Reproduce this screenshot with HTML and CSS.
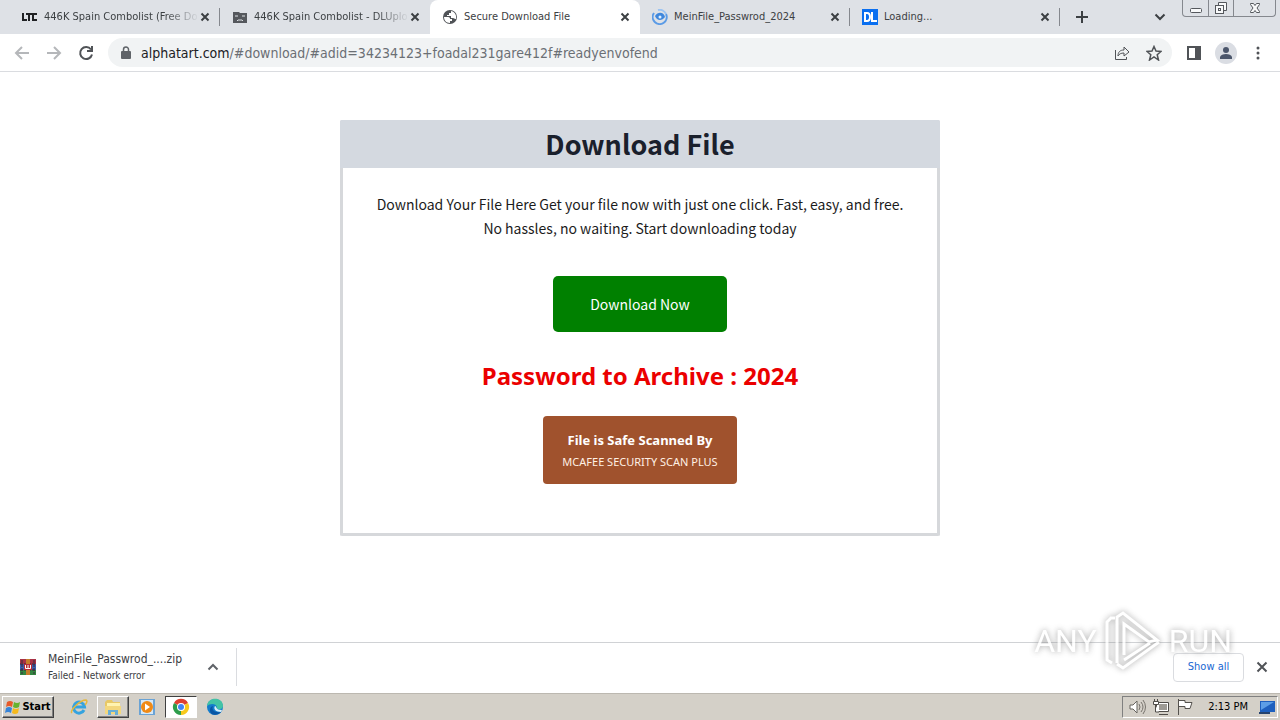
FILE: index.html
```html
<!DOCTYPE html>
<html lang="en">
<head>
<meta charset="utf-8">
<title>Secure Download File</title>
<link rel="stylesheet" href="styles.css">
</head>
<body>
<div class="screen">
  <header class="tab-strip">
    <div class="tab">
      <svg class="icon" viewBox="0 0 16 16"><path d="M1 4v7h4M4 5h6M7 5v7M15 5h-4v6h4" fill="none" stroke="#202124" stroke-width="2"/></svg>
      <span class="tab-title fade">446K Spain Combolist (Free Do</span>
      <button class="tab-close" aria-label="Close tab"><svg viewBox="0 0 10 10"><path d="M1.500 1.500l7 7M8.500 1.500l-7 7"/></svg></button>
    </div>
    <div class="tab no-line">
      <svg class="icon" viewBox="0 0 16 16"><path d="M1 3h6l1 1h7v10H1z" fill="#55585d"/><path d="M3 7h3M10 7h3M5 12l1-1h4l1 1" stroke="#dee1e6" fill="none"/></svg>
      <span class="tab-title fade">446K Spain Combolist - DLUplo</span>
      <button class="tab-close" aria-label="Close tab"><svg viewBox="0 0 10 10"><path d="M1.500 1.500l7 7M8.500 1.500l-7 7"/></svg></button>
    </div>
    <div class="tab active">
      <svg class="icon" viewBox="0 0 16 16"><circle cx="8" cy="8" r="7" fill="#505357"/><path d="M2 8h4c2 0 2 1 2 2h2v2H8v2c-4 0-6-3-6-6zM9 2v2H7v2H5v1h4v2h2c1 0 1 1 3 1 1-4-2-8-5-8z" fill="#fff"/></svg>
      <span class="tab-title">Secure Download File</span>
      <button class="tab-close" aria-label="Close tab"><svg viewBox="0 0 10 10"><path d="M1.500 1.500l7 7M8.500 1.500l-7 7"/></svg></button>
    </div>
    <div class="tab">
      <svg class="icon" viewBox="0 0 16 16"><path d="M2 4a7 7 0 1 0 12 1" fill="none" stroke="#5b9be6" stroke-width="2"/><path d="M6 1a7 7 0 0 1 8 4" fill="none" stroke="#9cc4f2" stroke-width="2"/><path d="M3 7c3-5 9-4 10 1-3 4-8 4-10-1z" fill="#3f87dc"/><circle cx="8" cy="8" r="1.500" fill="#dff0ff"/></svg>
      <span class="tab-title">MeinFile_Passwrod_2024</span>
      <button class="tab-close" aria-label="Close tab"><svg viewBox="0 0 10 10"><path d="M1.500 1.500l7 7M8.500 1.500l-7 7"/></svg></button>
    </div>
    <div class="tab">
      <svg class="icon" viewBox="0 0 16 16"><path d="M0 0h16v16H0z" fill="#0a6ff0"/><path d="M3 4h2q3 0 3 4t-3 4H3zM10 3v9h5" fill="none" stroke="#fff" stroke-width="2"/></svg>
      <span class="tab-title">Loading...</span>
      <button class="tab-close" aria-label="Close tab"><svg viewBox="0 0 10 10"><path d="M1.500 1.500l7 7M8.500 1.500l-7 7"/></svg></button>
    </div>
    <button class="new-tab" aria-label="New tab"><svg viewBox="0 0 14 14"><path d="M7 1v12M1 7h12" stroke="#3c4043" stroke-width="2"/></svg></button>
    <button class="tab-search" aria-label="Search tabs"><svg viewBox="0 0 12 12"><path d="M1.500 3.500L6 8l4.500-4.500" fill="none" stroke="#3c4043" stroke-width="2"/></svg></button>
    <div class="window-buttons">
      <button aria-label="Minimize"><svg viewBox="0 0 16 16"><rect x="2.500" y="8.500" width="11" height="4" rx="1"/></svg></button>
      <button aria-label="Restore"><svg viewBox="0 0 16 16"><path d="M5.500 5V2.500h8v8H11"/><rect x="2.500" y="5.500" width="8" height="8"/><rect x="5.500" y="8.500" width="2" height="2"/></svg></button>
      <button class="wide" aria-label="Close"><svg viewBox="0 0 16 16"><path d="M3.500 3.500h3L8 5.500l1.500-2h3v1L10 8l2.500 3.500v1h-3L8 10.500l-1.500 2h-3v-1L6 8 3.500 4.500z"/></svg></button>
    </div>
  </header>

  <nav class="toolbar">
    <button aria-label="Back"><svg class="dim" viewBox="0 0 16 16"><path d="M15 8H2M8 2L2 8l6 6"/></svg></button>
    <button aria-label="Forward"><svg class="dim" viewBox="0 0 16 16"><path d="M1 8h13M8 2l6 6-6 6"/></svg></button>
    <button aria-label="Reload"><svg class="dark" viewBox="0 0 16 16"><path d="M13 4.500A6 6 0 1 0 14 9.500M14 1v5H9"/></svg></button>
    <div class="address">
      <svg class="icon" viewBox="0 0 16 16"><rect x="3" y="6" width="10" height="8" rx="1" fill="#5f6368"/><path d="M5.500 7V4.500a2.500 2.500 0 0 1 5 0V7" fill="none" stroke="#5f6368" stroke-width="1.500"/></svg>
      <a class="url" href="#download">alphatart.com<span>/#download/#adid=34234123+foadal231gare412f#readyenvofend</span></a>
      <button aria-label="Share"><svg class="thin" viewBox="0 0 16 16"><path d="M1.500 5v9.500h11V12M4 11c0-4 2-6 6-6V2l5 5-5 4V8c-3 0-5 1-6 3z"/></svg></button>
      <button aria-label="Bookmark"><svg class="thin star" viewBox="0 0 16 16"><path d="M8 1.500l2 4.500 5 .5-3.800 3.300L12.500 15 8 12l-4.500 3 1.300-5.200L1 6.500 6 6z"/></svg></button>
    </div>
    <button aria-label="Side panel"><svg viewBox="0 0 16 16"><path d="M1 1h14v14H1zM3 3v10h6V3z" fill="#505357" fill-rule="evenodd"/></svg></button>
    <button class="profile" aria-label="Profile"><svg viewBox="0 0 16 16"><circle cx="8" cy="5" r="3"/><path d="M2 14v-2c1-4 11-4 12 0v2z"/></svg></button>
    <button aria-label="Menu"><svg viewBox="0 0 16 16"><g fill="#505357"><circle cx="8" cy="3" r="1.500"/><circle cx="8" cy="8" r="1.500"/><circle cx="8" cy="13" r="1.500"/></g></svg></button>
  </nav>

  <main class="page">
    <section class="card">
      <h1>Download File</h1>
      <div class="card-body">
        <p>Download Your File Here Get your file now with just one click. Fast, easy, and free. No hassles, no waiting. Start downloading today</p>
        <button class="download">Download Now</button>
        <h2>Password to Archive : 2024</h2>
        <button class="safe"><strong>File is Safe Scanned By</strong><span>MCAFEE SECURITY SCAN PLUS</span></button>
      </div>
    </section>
  </main>

  <section class="downloads">
    <div class="item">
      <svg class="icon" viewBox="0 0 16 16"><path d="M0 0h16v5H0z" fill="#a83246"/><path d="M0 5h16v6H0z" fill="#3d5fae"/><path d="M0 11h16v5H0z" fill="#348541"/><path d="M0 5h16M0 11h16M2 1v14M14 1v14" stroke="#382b3a" stroke-dasharray="3 1"/><path d="M6 0h4v16H6z" fill="#c67d2b"/><path d="M4 5h8v6H4z" fill="#b92c36"/><path d="M5.500 6v3.500h5V6M8 6v3" fill="none" stroke="#fff"/></svg>
      <div class="file"><span class="file-name">MeinFile_Passwrod_....zip</span><span class="file-state">Failed - Network error</span></div>
      <button aria-label="Download options"><svg viewBox="0 0 12 12"><path d="M1.500 8.500L6 4l4.500 4.500" fill="none" stroke="#5f6368" stroke-width="2"/></svg></button>
    </div>
    <button class="show-all">Show all</button>
    <button class="close-bar" aria-label="Close downloads"><svg viewBox="0 0 12 12"><path d="M1.500 1.500l9 9M10.500 1.500l-9 9" stroke="#505357" stroke-width="2"/></svg></button>
  </section>

  <footer class="taskbar">
    <button class="start raised"><svg viewBox="0 0 16 16"><path d="M2 3q3-2 6 0L7 8Q4 6 1 8z" fill="#e75a28"/><path d="M9 3q3 2 6 0l-1 5q-3 2-6 0z" fill="#66b32e"/><path d="M1 9q3-2 6 0l-1 5q-3-2-6 0z" fill="#3684d8"/><path d="M8 9q3 2 6 0l-1 5q-3 2-6 0z" fill="#f5b91c"/></svg>Start</button>
    <button class="task" aria-label="Internet Explorer"><svg viewBox="0 0 18 18"><path d="M14 12a5.500 5.500 0 1 1 .5-3H5" fill="none" stroke="#35a3df" stroke-width="3"/><path d="M2 15C-1 13 10 2 16 2c2 1 0 4-1 5" fill="none" stroke="#e6b83b" stroke-width="1.500"/></svg></button>
    <button class="task raised" aria-label="File Explorer"><svg viewBox="0 0 18 18"><path d="M1 4l2-2h5l1 2h7v12H1z" fill="#e8c866"/><path d="M3 5h13v5H3z" fill="#fff3b0"/><path d="M1 8h16v8H1z" fill="#f3d77d"/><path d="M4 17v-5h10v5h-3v-3H7v3z" fill="#69aed5"/></svg></button>
    <button class="task" aria-label="Media Player"><svg viewBox="0 0 18 18"><path d="M1 1h16v16H1z" fill="#6aa3d5"/><path d="M3 2h12v14H3z" fill="#d6e8f6"/><circle cx="9" cy="9" r="6" fill="#f08a16"/><path d="M7 5.500v7l5-3.500z" fill="#fff"/></svg></button>
    <button class="task pressed" aria-label="Chrome"><svg viewBox="0 0 18 18"><path d="M9 9L2 5a8 8 0 0 1 14 0z" fill="#df4030"/><path d="M9 9l7-4a8 8 0 0 1-7 12z" fill="#f8c91c"/><path d="M9 9v8A8 8 0 0 1 2 5z" fill="#2d9d4b"/><circle cx="9" cy="9" r="4" fill="#fff"/><circle cx="9" cy="9" r="3" fill="#4285f4"/></svg></button>
    <button class="task" aria-label="Edge"><svg viewBox="0 0 18 18"><circle cx="9" cy="9" r="8" fill="#137ccc"/><path d="M1 8C2-2 17-1 17 8c0 4-6 4-6 2 0-5-7-5-10-2z" fill="#43c3a5"/><path d="M7 8c-2 4 2 7 8 6-3 4-11 4-11-2 0-3 2-4 3-4z" fill="#0955a4"/><path d="M9 8c2 0 0 4 7 4l-1 2C10 14 7 11 9 8z" fill="#d8eefa"/></svg></button>
    <div class="tray">
      <svg viewBox="0 0 18 18"><path d="M2 7h3l4-4v12l-4-4H2z" fill="#fff" stroke="#67645f"/><path d="M11 6q2 3 0 6M13 4q4 5 0 10M15 2q5 7 0 14" fill="none" stroke="#77736d"/></svg>
      <svg viewBox="0 0 18 18"><path d="M4.500 4.500h12v9h-12zM7 16.500h9" fill="#fff" stroke="#4f4c48"/><path d="M7 6h8v6H7z" fill="#9d9a94"/><path d="M1.500 3.500h5v3h-5zM2.500 1v2M5.500 1v2M3.500 7v7H7" fill="#fff" stroke="#4f4c48"/></svg>
      <svg viewBox="0 0 18 18"><path d="M2.500 1v16M3 2.500h6v2h7l-2 6H9v-2H3" fill="#fff" stroke="#55524e"/></svg>
      <time>2:13 PM</time>
      <svg viewBox="0 0 18 18"><path d="M2 3h15v11H2z" fill="#1e60be"/><path d="M3 4h13L3 12z" fill="#5c9ee6"/><path d="M1 14h11v2H1z" fill="#26436e"/></svg>
    </div>
  </footer>

  <div class="watermark"><span>ANY</span><svg viewBox="0 0 60 64"><path d="M12 9H8l-4 4v38l5 3M14 54V8l6-4 34 27-8 2-25-18v31M14 55l6 4 36-26M21 51l26-17" /></svg><span>RUN</span></div>
</div>
</body>
</html>
```
FILE: styles.css
```css
* { box-sizing: border-box; }
body { margin: 0; background: #fff; color: #202124; font: 11px/16px "DejaVu Sans Condensed", "DejaVu Sans", sans-serif; }
button { display: flex; align-items: center; justify-content: center; border: 0; padding: 0; background: none; color: inherit; font: inherit; }
svg { display: block; flex: none; width: 16px; height: 16px; }
.screen { position: relative; display: flex; flex-direction: column; min-height: 100vh; }
.tab-strip { display: flex; height: 34px; padding-left: 10px; background: #dee1e6; }
.tab { display: flex; align-items: center; flex: 0 1 210px; min-width: 0; padding: 0 9px 0 10px; position: relative; }
.tab:not(.active):not(.no-line)::after { content: ""; position: absolute; right: 0; top: 8px; width: 1px; height: 18px; background: #85888e; }
.tab.active { background: #fff; border-radius: 8px 8px 0 0; }
.tab .icon { margin: 0 6px 0 2px; }
.tab-title { flex: 1; overflow: hidden; white-space: nowrap; color: #3c4043; }
.fade { -webkit-mask-image: linear-gradient(to right, #000 78%, transparent); mask-image: linear-gradient(to right, #000 78%, transparent); }
.tab-close svg { width: 10px; height: 10px; stroke: #3c4043; stroke-width: 2; }
.tab-close { width: 12px; height: 16px; }
.new-tab { width: 44px; }
.new-tab svg { width: 14px; height: 14px; }
.tab-search { margin-left: auto; width: 44px; }
.tab-search svg { width: 12px; height: 12px; }
.window-buttons { display: flex; height: 17px; margin-right: 4px; border: 1px solid #85888e; border-top: 0; border-radius: 0 0 4px 4px; }
.window-buttons button { width: 25px; }
.window-buttons button + button { border-left: 1px solid #85888e; }
.window-buttons .wide { width: 42px; }
.window-buttons svg { fill: #f8f9fa; stroke: #55585d; }
.toolbar { display: flex; align-items: center; gap: 16px; height: 38px; padding: 0 14px; border-bottom: 1px solid #dadce0; }
.toolbar svg { fill: none; }
.toolbar .dim { stroke: #b5b7ba; stroke-width: 2; }
.toolbar .dark { stroke: #505357; stroke-width: 2; }
.toolbar .thin { stroke: #505357; stroke-width: 1; }
.toolbar .star { stroke-width: 1.5; }
.address { display: flex; align-items: center; flex: 1; gap: 16px; height: 29px; margin-left: -2px; margin-right: -2px; padding: 0 10px; background: #f1f3f4; border-radius: 15px; }
.url { flex: 1; margin-left: -9px; color: #202124; font-size: 14px; line-height: 20px; text-decoration: none; white-space: nowrap; }
.url span { color: #6b6f74; }
.profile { width: 22px; height: 22px; margin: 0 -3px; border-radius: 50%; background: #dadde3; }
.toolbar .profile svg { fill: #4b566b; }
.page { flex: 1; padding: 48px 16px; }
.card { max-width: 600px; min-height: 416px; margin: 0 auto; border: 3px solid #d6d8db; border-top: 0; border-radius: 2px; text-align: center; }
h1 { margin: 0 -3px; background: #d4d9e0; color: #1a202c; border-radius: 2px 2px 0 0; font: bold 27px/48px "Noto Sans CJK SC", sans-serif; }
.card-body { display: flex; flex-direction: column; align-items: center; padding: 24px; }
p { margin: 0 0 36px; color: #1c1c1c; font: 14px/24px "Noto Sans CJK SC", sans-serif; }
.download { padding: 16px 37px; border-radius: 5px; background: #008000; color: #fff; font: 14px/24px "Noto Sans CJK SC", sans-serif; }
h2 { margin: 26px 0 22px; color: #eb0000; font: bold 24px/36px "Noto Sans", sans-serif; }
.safe { flex-direction: column; padding: 12px 19px; border-radius: 4px; background: #a0522d; color: #fff; font-family: "Noto Sans", sans-serif; }
.safe strong { font-size: 13px; line-height: 24px; }
.safe span { font-size: 11px; line-height: 20px; color: #fff0e4; }
.downloads { display: flex; align-items: center; height: 51px; padding: 0 12px 2px 20px; border-top: 1px solid #d0d2d5; }
.item { display: flex; align-items: center; width: 217px; height: 38px; border-right: 1px solid #dadce0; }
.file { display: flex; flex-direction: column; flex: 1; margin-left: 12px; color: #3c4043; }
.file-name { font-size: 12px; line-height: 18px; }
.file-state { font-size: 10px; }
.item button { margin-right: 17px; }
.item button svg, .close-bar svg { width: 12px; height: 12px; }
.show-all { width: 71px; height: 29px; margin-left: auto; border: 1px solid #dadce0; border-radius: 4px; color: #1967d2; }
.close-bar { margin-left: 12px; }
.taskbar { display: flex; align-items: center; gap: 2px; height: 27px; padding: 2px; background: #d4d0c8; border-top: 1px solid #bcb8b0; color: #000; }
.start { gap: 1px; width: 52px; height: 22px; margin-right: 7px; font-weight: bold; }
.raised { border: 1px solid; border-color: #fff #404040 #404040 #fff; box-shadow: inset -1px -1px #808080; }
.task { width: 32px; height: 22px; }
.task svg, .tray svg { width: 18px; height: 18px; }
.pressed { border: 1px solid; border-color: #404040 #fff #fff #404040; background: #fff; }
.tray { display: flex; align-items: center; gap: 6px; height: 22px; margin-left: auto; padding: 0 1px 0 5px; border: 1px solid; border-color: #808080 #fff #fff #808080; }
time { margin: 0 4px 0 8px; }
.watermark { position: absolute; right: 48px; bottom: 47px; display: flex; align-items: center; gap: 6px; color: #fff; opacity: 0.8; font: 32px/64px Roboto, sans-serif; filter: drop-shadow(0 0 3px #888); pointer-events: none; }
.watermark svg { width: 60px; height: 64px; fill: none; stroke: #fff; stroke-width: 3; }
```
